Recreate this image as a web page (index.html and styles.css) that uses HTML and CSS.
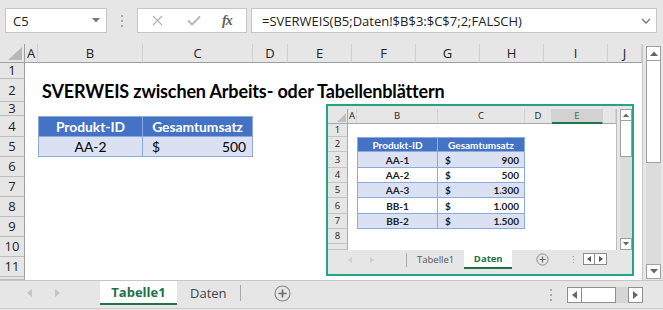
FILE: index.html
```html
<!DOCTYPE html>
<html lang="de">
<head>
    <meta charset="UTF-8">
    <meta name="viewport" content="width=device-width, initial-scale=1.0">
    <title>SVERWEIS zwischen Arbeits- oder Tabellenblättern</title>
    <link rel="stylesheet" href="styles.css">
</head>
<body>
<div class="app">

    <!-- Bearbeitungsleiste -->
    <div class="formula-bar">
        <div class="name-box">
            <span>C5</span>
            <svg width="8" height="5" viewBox="0 0 8 5"><polygon points="0,0 8,0 4,4.5" fill="#7a7a7a"/></svg>
        </div>
        <div class="grip"><i></i><i></i><i></i></div>
        <div class="fx-box">
            <svg class="ic-x" width="11" height="11" viewBox="0 0 11 11"><path d="M1 1 L10 10 M10 1 L1 10" stroke="#b4b4b4" stroke-width="1.3" fill="none"/></svg>
            <svg class="ic-check" width="14" height="11" viewBox="0 0 14 11"><path d="M1 5.5 L5 9.5 L13 1.5" stroke="#b4b4b4" stroke-width="1.8" fill="none"/></svg>
            <span class="fx">fx</span>
        </div>
        <div class="formula-input">
            <span>=SVERWEIS(B5;Daten!$B$3:$C$7;2;FALSCH)</span>
            <svg width="10" height="6" viewBox="0 0 10 6"><path d="M1 1 L5 5 L9 1" stroke="#777" stroke-width="1.4" fill="none"/></svg>
        </div>
    </div>

    <!-- Tabelle -->
    <div class="sheet-row">
        <div class="sheet">
            <div class="corner"><svg width="14" height="13" viewBox="0 0 14 13"><polygon points="14,0 14,13 0,13" fill="#b8b8b8"/></svg></div>
            <div class="ch">A</div>
            <div class="ch">B</div>
            <div class="ch">C</div>
            <div class="ch">D</div>
            <div class="ch">E</div>
            <div class="ch">F</div>
            <div class="ch">G</div>
            <div class="ch">H</div>
            <div class="ch">I</div>
            <div class="ch">J</div>

            <div class="rh">1</div>
            <div class="rh">2</div>
            <div class="rh">3</div>
            <div class="rh">4</div>
            <div class="rh">5</div>
            <div class="rh">6</div>
            <div class="rh">7</div>
            <div class="rh">8</div>
            <div class="rh">9</div>
            <div class="rh">10</div>
            <div class="rh">11</div>
            <div class="rh"></div>

            <div class="title">SVERWEIS zwischen Arbeits- oder Tabellenblättern</div>

            <div class="tb-head tb-first main-r4 col-b">Produkt-ID</div>
            <div class="tb-head main-r4 col-c">Gesamtumsatz</div>
            <div class="tb-cell tb-first main-r5 col-b">AA-2</div>
            <div class="tb-cell tb-money main-r5 col-c"><span>$</span><span>500</span></div>
        </div>

        <div class="vscroll">
            <div class="vs-btn"><svg width="8" height="5" viewBox="0 0 8 5"><polygon points="0,5 8,5 4,0.5" fill="#666"/></svg></div>
            <div class="vs-thumb"></div>
            <div class="vs-track"></div>
            <div class="vs-btn vs-down"><svg width="8" height="5" viewBox="0 0 8 5"><polygon points="0,0 8,0 4,4.5" fill="#666"/></svg></div>
        </div>
    </div>

    <!-- Blattregister -->
    <div class="tab-bar">
        <div class="tab-nav">
            <svg width="5" height="8" viewBox="0 0 5 8"><polygon points="5,0 5,8 0,4" fill="#c4c4c4"/></svg>
            <svg width="5" height="8" viewBox="0 0 5 8"><polygon points="0,0 0,8 5,4" fill="#c4c4c4"/></svg>
        </div>
        <div class="tab active">Tabelle1</div>
        <div class="tab">Daten</div>
        <div class="tab-sep"></div>
        <svg class="add-sheet" width="17" height="17" viewBox="0 0 17 17">
            <circle cx="8.5" cy="8.5" r="7.5" stroke="#8a8a8a" stroke-width="1.2" fill="none"/>
            <path d="M8.5 4.5 V12.5 M4.5 8.5 H12.5" stroke="#6a6a6a" stroke-width="1.6"/>
        </svg>
        <div class="tab-right">
            <div class="grip small"><i></i><i></i><i></i></div>
            <div class="hscroll">
                <div class="hs-btn"><svg width="5" height="8" viewBox="0 0 5 8"><polygon points="5,0 5,8 0,4" fill="#666"/></svg></div>
                <div class="hs-thumb"></div>
                <div class="hs-track"></div>
                <div class="hs-btn"><svg width="5" height="8" viewBox="0 0 5 8"><polygon points="0,0 0,8 5,4" fill="#666"/></svg></div>
            </div>
        </div>
    </div>

    <!-- eingefügtes Bild: Blatt "Daten" -->
    <div class="picture">
        <div class="mini-body">
            <div class="mini-grid">
                <div class="mcorner"><svg width="9" height="9" viewBox="0 0 9 9"><polygon points="9,0 9,9 0,9" fill="#c0c0c0"/></svg></div>
                <div class="mch">A</div>
                <div class="mch">B</div>
                <div class="mch">C</div>
                <div class="mch">D</div>
                <div class="mch selected">E</div>
                <div class="mch"></div>

                <div class="mrh">1</div>
                <div class="mrh">2</div>
                <div class="mrh">3</div>
                <div class="mrh">4</div>
                <div class="mrh">5</div>
                <div class="mrh">6</div>
                <div class="mrh">7</div>
                <div class="mrh">8</div>
                <div class="mrh"></div>

                <div class="mt-head mt-first mini-r2 col-b">Produkt-ID</div>
                <div class="mt-head mini-r2 col-c">Gesamtumsatz</div>

                <div class="mt-cell mt-first band mini-r3 col-b">AA-1</div>
                <div class="mt-cell mt-money band mini-r3 col-c"><span>$</span><span>900</span></div>
                <div class="mt-cell mt-first mini-r4 col-b">AA-2</div>
                <div class="mt-cell mt-money mini-r4 col-c"><span>$</span><span>500</span></div>
                <div class="mt-cell mt-first band mini-r5 col-b">AA-3</div>
                <div class="mt-cell mt-money band mini-r5 col-c"><span>$</span><span>1.300</span></div>
                <div class="mt-cell mt-first mini-r6 col-b">BB-1</div>
                <div class="mt-cell mt-money mini-r6 col-c"><span>$</span><span>1.000</span></div>
                <div class="mt-cell mt-first band mini-r7 col-b">BB-2</div>
                <div class="mt-cell mt-money band mini-r7 col-c"><span>$</span><span>1.500</span></div>
            </div>
            <div class="mini-vscroll">
                <div class="mvs-btn"><svg width="6" height="4" viewBox="0 0 6 4"><polygon points="0,4 6,4 3,0.5" fill="#666"/></svg></div>
                <div class="mvs-thumb"></div>
                <div class="mvs-track"></div>
                <div class="mvs-btn"><svg width="6" height="4" viewBox="0 0 6 4"><polygon points="0,0 6,0 3,3.5" fill="#666"/></svg></div>
            </div>
        </div>
        <div class="mini-tabs">
            <div class="mtab-nav">
                <svg width="4" height="6" viewBox="0 0 4 6"><polygon points="4,0 4,6 0,3" fill="#cfcfcf"/></svg>
                <svg width="4" height="6" viewBox="0 0 4 6"><polygon points="0,0 0,6 4,3" fill="#cfcfcf"/></svg>
            </div>
            <div class="mtab-sep"></div>
            <div class="mtab">Tabelle1</div>
            <div class="mtab active">Daten</div>
            <svg class="madd" width="13" height="13" viewBox="0 0 13 13">
                <circle cx="6.5" cy="6.5" r="5.6" stroke="#8a8a8a" stroke-width="1" fill="none"/>
                <path d="M6.5 3.5 V9.5 M3.5 6.5 H9.5" stroke="#6a6a6a" stroke-width="1.2"/>
            </svg>
            <div class="grip tiny"><i></i><i></i><i></i></div>
            <div class="mnav">
                <div class="mnav-btn"><svg width="4" height="6" viewBox="0 0 4 6"><polygon points="4,0 4,6 0,3" fill="#555"/></svg></div>
                <div class="mnav-btn"><svg width="4" height="6" viewBox="0 0 4 6"><polygon points="0,0 0,6 4,3" fill="#555"/></svg></div>
            </div>
        </div>
    </div>

</div>
</body>
</html>
```

FILE: styles.css
```css
* {
    box-sizing: border-box;
}

body {
    margin: 0;
    background-color: #e6e6e6;
    font-family: "Open Sans", "Noto Sans", sans-serif;
    color: #222;
}

.app {
    position: relative;
    width: 663px;
    height: 310px;
    overflow: hidden;
}

/* ---------- Bearbeitungsleiste ---------- */
.formula-bar {
    display: flex;
    align-items: flex-start;
    height: 44px;
    padding: 8px 6px 0 5px;
}

.name-box {
    width: 102px;
    height: 25px;
    background: #fff;
    border: 1px solid #c6c6c6;
    display: flex;
    align-items: center;
    justify-content: space-between;
    padding: 0 6px 0 7px;
    font-size: 13px;
}

.grip {
    width: 30px;
    height: 25px;
    display: flex;
    flex-direction: column;
    align-items: center;
    justify-content: center;
    gap: 3px;
}
.grip i {
    display: block;
    width: 2px;
    height: 2px;
    background: #a8a8a8;
}

.fx-box {
    width: 110px;
    height: 25px;
    background: #fff;
    border: 1px solid #c6c6c6;
    display: flex;
    align-items: center;
    padding-left: 14px;
}
.ic-check {
    margin-left: 24px;
}
.fx {
    margin-left: 21px;
    font-family: "Liberation Serif", serif;
    font-style: italic;
    font-weight: bold;
    font-size: 14px;
    color: #606060;
    letter-spacing: -1px;
}

.formula-input {
    flex: 1;
    margin-left: 4px;
    height: 25px;
    background: #fff;
    border: 1px solid #c6c6c6;
    display: flex;
    align-items: center;
    justify-content: space-between;
    padding: 0 5px 0 10px;
    font-size: 13px;
}

/* ---------- Tabellenblatt ---------- */
.sheet-row {
    display: flex;
    height: 236px;
}

.sheet {
    width: 643px;
    background: #fff;
    border-right: 1px solid #c6c6c6;
    display: grid;
    grid-template-columns: 25px 13px 105px 110px 35px 64px 64px 64px 64px 64px 34px;
    grid-template-rows: 19px 16px 23px 14px 21px 20px repeat(6, 20px) 3px;
    font-size: 13px;
}

.corner {
    background: #e6e6e6;
    border-right: 1px solid #9e9e9e;
    border-bottom: 1px solid #9e9e9e;
    display: flex;
    align-items: flex-end;
    justify-content: flex-end;
    padding: 0 2px 2px 0;
}

.ch {
    background: #e6e6e6;
    border-right: 1px solid #d0d0d0;
    border-bottom: 1px solid #9e9e9e;
    display: flex;
    align-items: center;
    justify-content: center;
    line-height: 1;
}

.rh {
    grid-column: 1;
    background: #e6e6e6;
    border-right: 1px solid #9e9e9e;
    border-bottom: 1px solid #bdbdbd;
    display: flex;
    align-items: center;
    justify-content: center;
    line-height: 1;
}

.title {
    grid-row: 3;
    grid-column: 3 / 11;
    align-self: center;
    padding-left: 4px;
    font-family: Lato, "Liberation Sans", sans-serif;
    font-weight: bold;
    font-size: 18px;
    letter-spacing: -0.15px;
    color: #000;
    white-space: nowrap;
}

.col-b { grid-column: 3; }
.col-c { grid-column: 4; }
.main-r4 { grid-row: 5; }
.main-r5 { grid-row: 6; }

.tb-head,
.tb-cell {
    display: flex;
    align-items: center;
    justify-content: center;
    font-family: Lato, "Liberation Sans", sans-serif;
    font-size: 13.8px;
    border-right: 1px solid #8ea9db;
    border-bottom: 1px solid #8ea9db;
}
.tb-head {
    background: #4472c4;
    color: #fff;
    font-weight: bold;
    border-top: 1px solid #8ea9db;
}
.tb-cell {
    background: #d9e1f2;
    color: #000;
}
.tb-first {
    border-left: 1px solid #8ea9db;
}
.tb-money {
    justify-content: space-between;
    padding: 0 6px 0 9px;
}

/* Bildlaufleiste senkrecht */
.vscroll {
    width: 15px;
    margin: 2px 0 1px 3px;
    display: flex;
    flex-direction: column;
    background: #dcdcdc;
}
.vs-btn {
    height: 15px;
    background: #fff;
    border: 1px solid #a0a0a0;
    display: flex;
    align-items: center;
    justify-content: center;
}
.vs-thumb {
    height: 102px;
    background: #fff;
    border: 1px solid #a0a0a0;
    border-top: none;
}
.vs-track {
    flex: 1;
}

/* ---------- Blattregister ---------- */
.tab-bar {
    display: flex;
    align-items: flex-start;
    height: 29px;
    border-top: 1px solid #c6c6c6;
    border-bottom: 1px solid #cfcfcf;
    font-size: 13px;
}

.tab-nav {
    width: 100px;
    height: 24px;
    display: flex;
    align-items: center;
    padding-left: 27px;
    gap: 23px;
}

.tab {
    height: 24px;
    padding: 0 13px;
    display: flex;
    align-items: center;
    color: #444;
}
.tab.active {
    width: 77px;
    justify-content: center;
    background: #fff;
    color: #217346;
    font-weight: bold;
    border-bottom: 2px solid #217346;
}

.tab-sep {
    width: 1px;
    height: 16px;
    margin-top: 4px;
    background: #a8a8a8;
}

.add-sheet {
    margin: 4px 0 0 33px;
}

.tab-right {
    margin-left: auto;
    display: flex;
    align-items: center;
    height: 24px;
    margin-top: 2px;
    margin-right: 20px;
}
.grip.small {
    width: 16px;
    height: 16px;
    margin-right: 8px;
}

.hscroll {
    display: flex;
    height: 16px;
}
.hs-btn {
    width: 15px;
    height: 16px;
    background: #fff;
    border: 1px solid #8e8e8e;
    display: flex;
    align-items: center;
    justify-content: center;
}
.hs-thumb {
    width: 34px;
    background: #fff;
    border: 1px solid #8e8e8e;
    border-left: none;
}
.hs-track {
    width: 12px;
    background: #d6d6d6;
}

/* ---------- eingefügtes Bild ---------- */
.picture {
    position: absolute;
    left: 326px;
    top: 104px;
    width: 308px;
    height: 172px;
    border: 2px solid #22a582;
    background: #e6e6e6;
    display: flex;
    flex-direction: column;
}

.mini-body {
    display: flex;
    height: 144px;
}

.mini-grid {
    width: 289px;
    height: 141px;
    margin-top: 3px;
    background: #fff;
    border-right: 1px solid #bdbdbd;
    display: grid;
    grid-template-columns: 20px 9px 81px 87px 27px 51px 13px;
    grid-template-rows: 15px 13px 15px 16px 15px 15px 16px 15px 15px 6px;
    font-size: 9.5px;
    overflow: hidden;
}

.mcorner {
    background: #e6e6e6;
    border-right: 1px solid #a8a8a8;
    border-bottom: 1px solid #a8a8a8;
    display: flex;
    align-items: flex-end;
    justify-content: flex-end;
    padding: 0 1px 1px 0;
}

.mch {
    background: #e6e6e6;
    border-right: 1px solid #d2d2d2;
    border-bottom: 1px solid #a8a8a8;
    display: flex;
    align-items: center;
    justify-content: center;
    line-height: 1;
}
.mch.selected {
    background: #d2d2d2;
    color: #2f6b4b;
    border-bottom: 2px solid #217346;
}

.mrh {
    grid-column: 1;
    background: #e6e6e6;
    border-right: 1px solid #a8a8a8;
    border-bottom: 1px solid #c4c4c4;
    display: flex;
    align-items: center;
    justify-content: center;
    line-height: 1;
}

.mini-r2 { grid-row: 3; }
.mini-r3 { grid-row: 4; }
.mini-r4 { grid-row: 5; }
.mini-r5 { grid-row: 6; }
.mini-r6 { grid-row: 7; }
.mini-r7 { grid-row: 8; }

.mt-head,
.mt-cell {
    display: flex;
    align-items: center;
    justify-content: center;
    font-family: Lato, "Liberation Sans", sans-serif;
    font-size: 10px;
    font-weight: bold;
    border-right: 1px solid #8ea9db;
    border-bottom: 1px solid #8ea9db;
}
.mt-head {
    background: #4472c4;
    color: #fff;
    border-top: 1px solid #8ea9db;
}
.mt-cell {
    background: #fff;
    color: #222;
}
.mt-cell.band {
    background: #d9e1f2;
}
.mt-first {
    border-left: 1px solid #8ea9db;
}
.mt-money {
    justify-content: space-between;
    padding: 0 5px 0 7px;
}

.mini-vscroll {
    width: 12px;
    margin: 3px 0 0 3px;
    display: flex;
    flex-direction: column;
    background: #dcdcdc;
}
.mvs-btn {
    height: 12px;
    background: #fff;
    border: 1px solid #a0a0a0;
    display: flex;
    align-items: center;
    justify-content: center;
}
.mvs-thumb {
    height: 36px;
    background: #fff;
    border: 1px solid #a0a0a0;
    border-top: none;
}
.mvs-track {
    flex: 1;
}

.mini-tabs {
    flex: 1;
    display: flex;
    align-items: flex-start;
    font-size: 9.5px;
}

.mtab-nav {
    width: 78px;
    height: 19px;
    display: flex;
    align-items: center;
    padding-left: 20px;
    gap: 18px;
}

.mtab-sep {
    width: 1px;
    height: 14px;
    margin-top: 3px;
    background: #a8a8a8;
}

.mtab {
    height: 19px;
    padding: 0 10px;
    display: flex;
    align-items: center;
    color: #555;
}
.mtab.active {
    width: 48px;
    justify-content: center;
    background: #fff;
    color: #217346;
    font-weight: bold;
    border-bottom: 2px solid #217346;
}

.madd {
    margin: 3px 0 0 24px;
}

.grip.tiny {
    width: 12px;
    height: 19px;
    margin-left: 18px;
    gap: 2px;
}
.grip.tiny i {
    width: 1px;
    height: 1px;
    background: #999;
}

.mnav {
    display: flex;
    margin: 3px 0 0 4px;
}
.mnav-btn {
    width: 12px;
    height: 12px;
    background: #fff;
    border: 1px solid #8e8e8e;
    display: flex;
    align-items: center;
    justify-content: center;
}
.mnav-btn + .mnav-btn {
    border-left: none;
}
```
